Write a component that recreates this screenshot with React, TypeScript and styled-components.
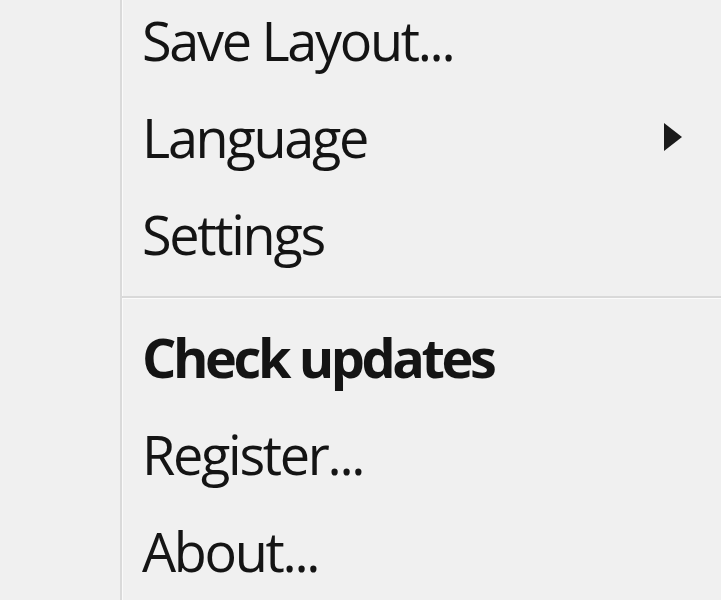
import styled, { createGlobalStyle } from "styled-components"

const Global = createGlobalStyle`
  html, body {
    margin: 0;
    padding: 0;
    background: #f0f0f0;
    overflow: hidden;
  }
`

const Page = styled.div`
  display: flex;
  width: 721px;
  height: 600px;
  background: #f0f0f0;
  overflow: hidden;
`

const Gutter = styled.div`
  width: 120px;
  flex: none;
`

const Menu = styled.div`
  flex: 1;
  border-left: 2px solid #dadada;
  box-shadow: inset 1px 0 0 #fafafa;
  display: flex;
  flex-direction: column;
  margin-top: -9px;
`

const Item = styled.div<{ $bold?: boolean }>`
  display: flex;
  align-items: center;
  justify-content: space-between;
  height: 97px;
  padding: 0 38px 0 20px;
  font-family: "Open Sans", "Noto Sans", sans-serif;
  font-size: 54px;
  font-weight: ${p => (p.$bold ? 700 : 400)};
  letter-spacing: ${p => (p.$bold ? "-3.4px" : "-2.3px")};
  color: #141414;
  flex: none;
`

const Separator = styled.div`
  height: 26px;
  display: flex;
  align-items: center;
  padding-top: 4px;
  box-sizing: border-box;
  flex: none;

  &::before {
    content: "";
    flex: 1;
    height: 2px;
    background: #d9d9d9;
    border-bottom: 1px solid #fbfbfb;
  }
`

const Arrow = styled.svg`
  width: 20px;
  height: 30px;
  color: #1a1a1a;
`

function App() {
  return (
    <Page>
      <Global />
      <Gutter />
      <Menu>
        <Item>Save Layout...</Item>
        <Item>
          Language
          <Arrow viewBox="0 0 20 30">
            <path d="M1 1 L19 15 L1 29 Z" fill="currentColor" />
          </Arrow>
        </Item>
        <Item>Settings</Item>
        <Separator />
        <Item $bold>Check updates</Item>
        <Item>Register...</Item>
        <Item>About...</Item>
      </Menu>
    </Page>
  )
}

export default App
